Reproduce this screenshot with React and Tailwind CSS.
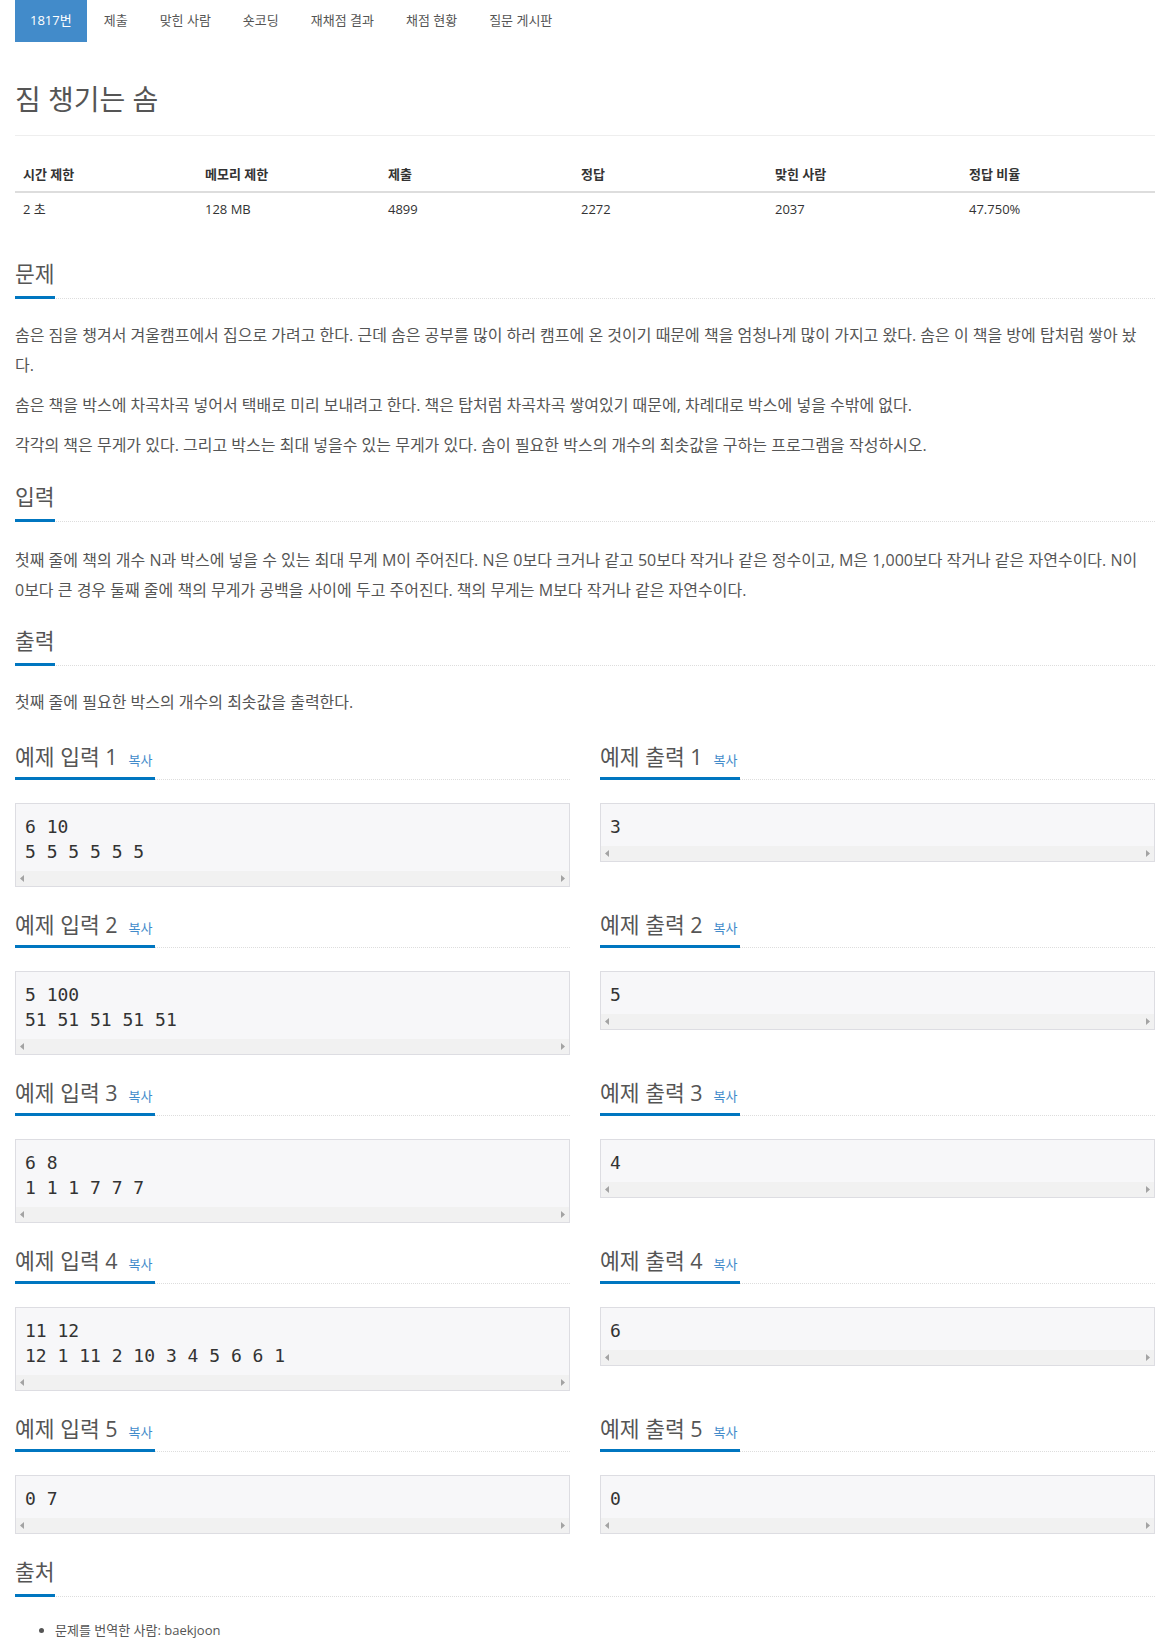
const tabs = ['1817번', '제출', '맞힌 사람', '숏코딩', '재채점 결과', '채점 현황', '질문 게시판']

const stats = [
  ['시간 제한', '2 초'],
  ['메모리 제한', '128 MB'],
  ['제출', '4899'],
  ['정답', '2272'],
  ['맞힌 사람', '2037'],
  ['정답 비율', '47.750%'],
]

const samples = [
  { input: '6 10\n5 5 5 5 5 5', output: '3' },
  { input: '5 100\n51 51 51 51 51', output: '5' },
  { input: '6 8\n1 1 1 7 7 7', output: '4' },
  { input: '11 12\n12 1 11 2 10 3 4 5 6 6 1', output: '6' },
  { input: '0 7', output: '0' },
]

export default function App() {
  return (
    <div className="min-h-[1652px] bg-white font-['Open_Sans','Noto_Sans_CJK_KR',sans-serif] text-[#555]">
      <div className="mx-auto flex w-[1170px] flex-col px-[15px]">
        <ul className="flex h-[42px]">
          {tabs.map((tab, i) => (
            <li key={tab} className="mr-[2px] flex">
              <a className={i === 0 ? 'flex items-center bg-[#428bca] px-[15px] text-[13px] text-white' : 'flex items-center px-[15px] text-[13px] text-[#555]'}>{tab}</a>
            </li>
          ))}
        </ul>

        <div className="border-b border-[#eee] pt-[37px] pb-[16px]">
          <h1 className="text-[28px] leading-[40px] text-[#555]">짐 챙기는 솜</h1>
        </div>

        <div className="mt-[21.5px] grid grid-cols-[182px_183px_193px_194px_194px_194px] text-[#333]">
          {stats.map(([label]) => (
            <div key={label} className="border-b-2 border-[#ddd] p-[8px] text-[13px] leading-[17px] font-bold">{label}</div>
          ))}
          {stats.map(([label, value]) => (
            <div key={label} className="p-[8px] text-[13px] leading-[17px]">{value}</div>
          ))}
        </div>

        <Section className="mt-[34.5px]" title="문제" />
        <div className="mt-[21px] flex flex-col gap-[10px] text-[16px] leading-[30px]">
          <p>솜은 짐을 챙겨서 겨울캠프에서 집으로 가려고 한다. 근데 솜은 공부를 많이 하러 캠프에 온 것이기 때문에 책을 엄청나게 많이 가지고 왔다. 솜은 이 책을 방에 탑처럼 쌓아 놨다.</p>
          <p>솜은 책을 박스에 차곡차곡 넣어서 택배로 미리 보내려고 한다. 책은 탑처럼 차곡차곡 쌓여있기 때문에, 차례대로 박스에 넣을 수밖에 없다.</p>
          <p>각각의 책은 무게가 있다. 그리고 박스는 최대 넣을수 있는 무게가 있다. 솜이 필요한 박스의 개수의 최솟값을 구하는 프로그램을 작성하시오.</p>
        </div>

        <Section className="mt-[23px]" title="입력" />
        <p className="mt-[23px] text-[16px] leading-[30px]">첫째 줄에 책의 개수 N과 박스에 넣을 수 있는 최대 무게 M이 주어진다. N은 0보다 크거나 같고 50보다 작거나 같은 정수이고, M은 1,000보다 작거나 같은 자연수이다. N이 <span className="whitespace-nowrap">0보다</span> 큰 경우 둘째 줄에 책의 무게가 공백을 사이에 두고 주어진다. 책의 무게는 M보다 작거나 같은 자연수이다.</p>

        <Section className="mt-[22px]" title="출력" />
        <p className="mt-[21px] text-[16px] leading-[30px]">첫째 줄에 필요한 박스의 개수의 최솟값을 출력한다.</p>

        {samples.map((sample, i) => (
          <div key={i} className={i === 0 ? 'mt-[26px] grid grid-cols-2 gap-x-[30px]' : 'mt-[24px] grid grid-cols-2 gap-x-[30px]'}>
            <div>
              <SampleHead title={`예제 입력 ${i + 1}`} />
              <SampleBox text={sample.input} />
            </div>
            <div>
              <SampleHead title={`예제 출력 ${i + 1}`} />
              <SampleBox text={sample.output} />
            </div>
          </div>
        ))}

        <Section className="mt-[24px]" title="출처" />
        <ul className="mt-[23px] list-disc pl-[40px] text-[13px] leading-[20px]">
          <li>문제를 번역한 사람: baekjoon</li>
        </ul>
      </div>
    </div>
  )
}

function Section({ title, className }) {
  return (
    <div className={`flex border-b border-dotted border-[#ddd] ${className}`}>
      <h2 className="-mb-px border-b-[3px] border-[#0076c0] pb-[8px] text-[21.5px] leading-[28px] text-[#555]">{title}</h2>
    </div>
  )
}

function SampleHead({ title }) {
  return (
    <div className="flex border-b border-dotted border-[#ddd]">
      <h2 className="-mb-px flex h-[37px] items-baseline border-b-[3px] border-[#0076c0] pr-[2px] pb-[6px] text-[21.5px] leading-[28px] text-[#555]">
        {title}
        <a className="ml-[11px] text-[13px] leading-[16px] text-[#428bca]">복사</a>
      </h2>
    </div>
  )
}

function SampleBox({ text }) {
  return (
    <div className="mt-[23px] border border-[#dddde2] bg-[#f7f7f9]">
      <pre className="px-[9px] pt-[10px] pb-[7px] font-['DejaVu_Sans_Mono',monospace] text-[18px] leading-[25px] text-[#333]">{text}</pre>
      <div className="flex h-[15px] items-center justify-between bg-[#f1f1f1] px-[4px]">
        <svg width="4" height="7" viewBox="0 0 4 7"><path d="M4 0L0 3.5L4 7Z" fill="#a3a3a3" /></svg>
        <svg width="4" height="7" viewBox="0 0 4 7"><path d="M0 0L4 3.5L0 7Z" fill="#a3a3a3" /></svg>
      </div>
    </div>
  )
}
